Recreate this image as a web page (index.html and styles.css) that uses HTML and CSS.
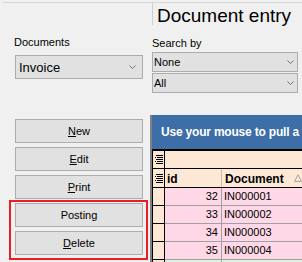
FILE: index.html
```html
<!DOCTYPE html>
<html>
<head>
  <title>Document entry</title>
  <link rel="stylesheet" href="styles.css">
</head>
<body>
  <div class="top-rule"></div>
  <div class="layout">
    <!-- Left side: document type and actions -->
    <div class="side">
      <div class="field-label label-docs">Documents</div>
      <div class="combo combo-large">
        <span>Invoice</span>
        <svg class="chevron" width="7" height="4" viewBox="0 0 7 4"><path d="M0.5 0.5 L3.5 3.5 L6.5 0.5" fill="none" stroke="#707070" stroke-width="1"/></svg>
      </div>

      <div class="actions">
        <button class="btn"><u>N</u>ew</button>
        <button class="btn"><u>E</u>dit</button>
        <button class="btn"><u>P</u>rint</button>
        <div class="highlight">
          <button class="btn">Posting</button>
          <button class="btn"><u>D</u>elete</button>
        </div>
      </div>
    </div>

    <!-- Right side: search and grid -->
    <div class="main">
      <div class="title">Document entry</div>
      <div class="field-label label-search">Search by</div>
      <div class="combo combo-small combo-first">
        <span>None</span>
        <svg class="chevron" width="7" height="4" viewBox="0 0 7 4"><path d="M0.5 0.5 L3.5 3.5 L6.5 0.5" fill="none" stroke="#707070" stroke-width="1"/></svg>
      </div>
      <div class="combo combo-small combo-second">
        <span>All</span>
        <svg class="chevron" width="7" height="4" viewBox="0 0 7 4"><path d="M0.5 0.5 L3.5 3.5 L6.5 0.5" fill="none" stroke="#707070" stroke-width="1"/></svg>
      </div>

      <div class="grid">
        <div class="grid-banner">Use your mouse to pull a</div>
        <div class="grid-body">
          <div class="row group-row">
            <div class="ind">
              <svg class="ind-icon" width="8" height="9" viewBox="0 0 8 9"><path d="M1 0.5h7M0 2.5h1M2 2.5h6M1 4.5h7M0 6.5h1M2 6.5h6M1 8.5h7" stroke="#000" stroke-width="1"/></svg>
            </div>
            <div class="group-space"></div>
          </div>
          <div class="row head-row">
            <div class="ind">
              <svg class="ind-icon" width="8" height="9" viewBox="0 0 8 9"><path d="M1 0.5h7M0 2.5h1M2 2.5h6M1 4.5h7M0 6.5h1M2 6.5h6M1 8.5h7" stroke="#000" stroke-width="1"/></svg>
            </div>
            <div class="cell col-id head-cell">id</div>
            <div class="cell col-doc head-cell">Document
              <svg class="sort" width="8" height="8" viewBox="0 0 8 8"><path d="M4 0.8 L7.4 7.4 L0.6 7.4 Z" fill="none" stroke="#a0a0a0" stroke-width="1"/></svg>
            </div>
          </div>
          <div class="row data-row">
            <div class="ind"></div>
            <div class="cell col-id num">32</div>
            <div class="cell col-doc">IN000001</div>
          </div>
          <div class="row data-row">
            <div class="ind"></div>
            <div class="cell col-id num">33</div>
            <div class="cell col-doc">IN000002</div>
          </div>
          <div class="row data-row">
            <div class="ind"></div>
            <div class="cell col-id num">34</div>
            <div class="cell col-doc">IN000003</div>
          </div>
          <div class="row data-row">
            <div class="ind"></div>
            <div class="cell col-id num">35</div>
            <div class="cell col-doc">IN000004</div>
          </div>
          <div class="row data-row row-new">
            <div class="ind"></div>
            <div class="cell col-id num"></div>
            <div class="cell col-doc"></div>
          </div>
        </div>
      </div>
    </div>
  </div>
</body>
</html>
```

FILE: styles.css
```css
    html, body {
      overflow: hidden;
    }
    body {
      margin: 0;
      width: 302px;
      height: 262px;
      background: #f0f0f0;
      font-family: "Liberation Sans", Arial, sans-serif;
      color: #000;
    }
    .top-rule {
      height: 1px;
      margin: 2px 0 0 3px;
      background: #d6d6d6;
    }
    .layout {
      display: flex;
    }

    /* Left side */
    .side {
      width: 150px;
      flex: none;
      padding: 33px 0 0 15px;
      box-sizing: border-box;
    }
    .field-label {
      font-size: 11px;
      line-height: 13px;
    }
    .label-docs {
      margin-left: -1px;
    }
    .combo {
      display: flex;
      align-items: center;
      justify-content: space-between;
      box-sizing: border-box;
      border: 1px solid #adadad;
      background: #e1e1e1;
    }
    .combo-large {
      width: 128px;
      height: 24px;
      margin-top: 6px;
      padding: 0 6px 0 3px;
      font-size: 13px;
    }
    .chevron {
      display: block;
    }
    .actions {
      display: flex;
      flex-direction: column;
      margin-top: 40px;
    }
    .btn {
      display: block;
      width: 128px;
      height: 24px;
      margin: 0 0 4px 0;
      padding: 0;
      box-sizing: border-box;
      border: 1px solid #adadad;
      background: #e1e1e1;
      font-family: "Liberation Sans", Arial, sans-serif;
      font-size: 11px;
      color: #000;
      text-align: center;
    }
    .highlight {
      width: 139px;
      margin: -3px 0 0 -6px;
      padding: 1px 3px 3px 4px;
      box-sizing: border-box;
      border: 2px solid #ec1c24;
    }
    .highlight .btn:last-child {
      margin-bottom: 0;
    }

    /* Right side */
    .main {
      flex: 1;
      min-width: 0;
    }
    .title {
      height: 20px;
      margin-left: 2px;
      padding: 2px 0 0 4px;
      border-left: 1px solid #d0d0d0;
      font-size: 19px;
      line-height: 22px;
      white-space: nowrap;
    }
    .label-search {
      margin: 12px 0 0 2px;
    }
    .combo-small {
      width: 146px;
      height: 20px;
      margin-left: 2px;
      padding: 0 3px 0 1px;
      font-size: 11px;
    }
    .combo-first {
      margin-top: 2px;
    }
    .combo-second {
      margin-top: 1px;
    }

    /* Grid */
    .grid {
      height: 147px;
      margin-top: 22px;
      overflow: hidden;
      border-left: 2px solid #808080;
    }
    .grid-banner {
      height: 34px;
      padding-left: 9px;
      background: #3d6ea7;
      color: #fff;
      font-weight: bold;
      font-size: 12px;
      letter-spacing: -0.2px;
      line-height: 34px;
      white-space: nowrap;
      overflow: hidden;
    }
    .grid-body {
      border-top: 2px solid #000;
      font-size: 11px;
    }
    .row {
      display: flex;
      white-space: nowrap;
    }
    .ind {
      width: 11px;
      flex: none;
      display: flex;
      align-items: center;
      justify-content: center;
      border-left: 1px solid #000;
      border-right: 1px solid #000;
      background: #fde8d5;
    }
    .group-row {
      height: 18px;
      border-bottom: 1px solid #000;
      box-sizing: border-box;
      background: #fde8d5;
    }
    .group-space {
      flex: 1;
    }
    .head-row {
      height: 19px;
      border-bottom: 1px solid #000;
      box-sizing: border-box;
      background: #fde8d5;
    }
    .cell {
      box-sizing: border-box;
      overflow: hidden;
    }
    .col-id {
      width: 57px;
      flex: none;
      border-right: 1px solid #a0a0a0;
    }
    .col-doc {
      flex: 1;
    }
    .head-cell {
      display: flex;
      align-items: center;
      padding: 2px 0 0 2px;
      font-weight: bold;
      font-size: 12px;
    }
    .head-row .col-id {
      border-right-color: #d8b89a;
    }
    .head-row .col-doc {
      padding-left: 3px;
    }
    .sort {
      display: block;
      margin: -2px 0 0 10px;
    }
    .data-row {
      height: 18px;
      line-height: 17px;
    }
    .data-row .ind {
      border-bottom: 1px solid #000;
      box-sizing: content-box;
      height: 17px;
    }
    .data-row .cell {
      height: 18px;
      border-bottom: 1px solid #a0a0a0;
      background: #ffd8e7;
    }
    .data-row .col-doc {
      padding-left: 2px;
    }
    .num {
      text-align: right;
      padding-right: 3px;
    }
    .row-new .cell {
      background: #d8f5e2;
    }
```
